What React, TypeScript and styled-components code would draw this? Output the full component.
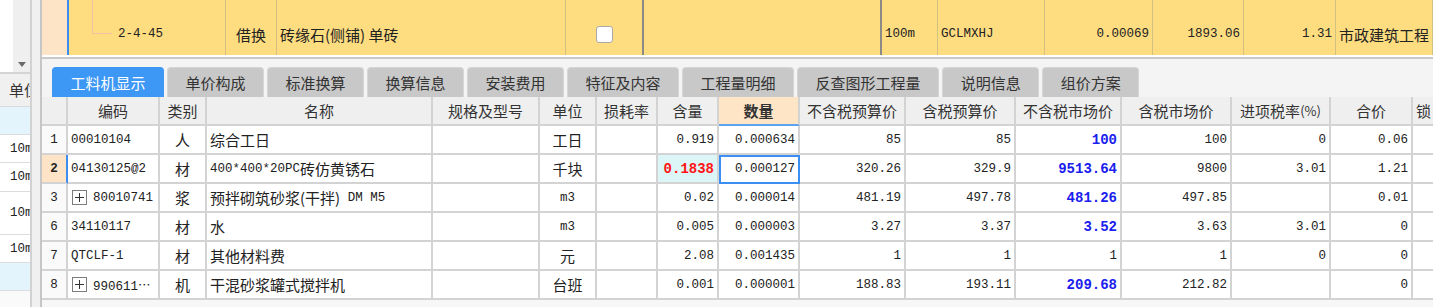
import React from 'react'
import styled, { createGlobalStyle } from 'styled-components'

const CJK = `"Noto Sans CJK SC", "Noto Sans", sans-serif`
const MONO = `"Liberation Mono", "Noto Sans CJK SC", monospace`

const GlobalStyle = createGlobalStyle`
  *, *::before, *::after { box-sizing: border-box; }
  html, body { margin: 0; padding: 0; }
  body {
    width: 1433px;
    height: 307px;
    overflow: hidden;
    background: #f7f7f7;
    font-family: ${CJK};
    color: #222;
  }
`

const Page = styled.div`
  display: flex;
  width: 1433px;
  height: 307px;
  overflow: hidden;
`

/* ---------- left side list ---------- */

const SidePane = styled.div`
  width: 40px;
  flex-shrink: 0;
  display: flex;
  background: #f0f0f0;
`

const SideList = styled.div`
  width: 32px;
  display: flex;
  flex-direction: column;
  background: #fff;
  border-right: 2px solid #d2d2d2;
  overflow: hidden;
`

const SideTop = styled.div`
  height: 72px;
  display: flex;
  flex-shrink: 0;
`

const SideBlank = styled.div`
  width: 13px;
  background: #fff;
`

const ScrollTrack = styled.div`
  flex: 1;
  background: #efefef;
  display: flex;
  flex-direction: column;
  justify-content: flex-end;
  align-items: center;
  padding-bottom: 5px;
`

const Arrow = styled.span`
  width: 0;
  height: 0;
  border-left: 4px solid transparent;
  border-right: 4px solid transparent;
  border-top: 5px solid #6b6b6b;
`

const SideHead = styled.div`
  height: 35px;
  flex-shrink: 0;
  background: #f0f0f0;
  border-top: 2px solid #d4d4d4;
  border-bottom: 1px solid #d9d9d9;
  font: 15px ${CJK};
  line-height: 32px;
  padding-left: 9px;
  white-space: nowrap;
  color: #333;
`

const SideRow = styled.div<{ $h: number; $tint?: boolean }>`
  height: ${p => p.$h}px;
  flex-shrink: 0;
  background: ${p => (p.$tint ? '#e4f4fc' : '#fff')};
  border-bottom: 1px solid #dcdcdc;
  display: flex;
  align-items: center;
  padding-left: 10px;
  font: 12.5px ${MONO};
  white-space: nowrap;
`

const SideFill = styled.div`
  flex: 1;
  background: #fafafa;
`

/* ---------- main pane ---------- */

const MainPane = styled.div`
  flex: 1;
  min-width: 0;
  display: flex;
  flex-direction: column;
  border-left: 2px solid #c6c6c6;
  background: #f7f7f7;
  overflow: hidden;
`

const TopRow = styled.div`
  display: flex;
  height: 55px;
  flex-shrink: 0;
  background: #fedd80;
`

const TopHead = styled.div`
  width: 27px;
  flex-shrink: 0;
  background: #fde4c7;
  border-right: 2px solid #3b8ef0;
`

const TopCell = styled.div<{ $w?: number; $align?: 'left' | 'center' | 'right'; $dark?: boolean; $mono?: boolean }>`
  ${p => (p.$w ? `width: ${p.$w}px; flex-shrink: 0;` : 'flex: 1;')}
  display: flex;
  align-items: center;
  justify-content: ${p => (p.$align === 'right' ? 'flex-end' : p.$align === 'center' ? 'center' : 'flex-start')};
  padding: 13px 3px 0;
  border-right: ${p => (p.$dark ? '2px solid #8b8a84' : '1px solid #d3c183')};
  font: ${p => (p.$mono ? `12.5px ${MONO}` : `15px ${CJK}`)};
  white-space: nowrap;
  overflow: hidden;
`

const TreeLine = styled.span`
  align-self: flex-start;
  margin: -13px 6px 0 20px;
  width: 20px;
  height: 34px;
  border-left: 1px solid #f3c1a4;
  border-bottom: 1px solid #f3c1a4;
`

const CheckBox = styled.span`
  width: 17px;
  height: 17px;
  background: #fff;
  border: 1px solid #a9a9a9;
  border-radius: 3px;
`

const Divider = styled.div`
  height: 4px;
  flex-shrink: 0;
  border-top: 2px solid #fff;
  background: #c9c9c9;
`

const TabBar = styled.div`
  height: 38px;
  flex-shrink: 0;
  display: flex;
  align-items: flex-end;
  gap: 3px;
  padding-left: 10px;
  background: #f4f4f4;
`

const Tab = styled.div<{ $active?: boolean }>`
  height: 30px;
  padding: 0 17.5px;
  display: flex;
  align-items: center;
  border: 1px solid ${p => (p.$active ? '#3d97f5' : '#d6d6d6')};
  border-bottom: none;
  border-radius: 4px 4px 0 0;
  background: ${p => (p.$active ? '#3d97f5' : '#c8c8c8')};
  color: ${p => (p.$active ? '#fff' : '#333')};
  font: 15px ${CJK};
  line-height: 1;
  white-space: nowrap;
`

/* ---------- material grid ---------- */

const COLS = '26px 92px 47px 226px 107px 57px 61px 61px 81px 106px 110px 106px 110px 99px 82px 40px'

const Grid = styled.div`
  display: flex;
  flex-direction: column;
  overflow: hidden;
`

const GridRow = styled.div`
  display: grid;
  grid-template-columns: ${COLS};
  height: 29px;
  flex-shrink: 0;
`

const HeadCell = styled.div<{ $active?: boolean; $start?: boolean }>`
  display: flex;
  align-items: center;
  justify-content: ${p => (p.$start ? 'flex-start' : 'center')};
  padding-left: ${p => (p.$start ? '3px' : '0')};
  background: ${p => (p.$active ? '#fde5c6' : '#efefef')};
  border-right: 2px solid #d3d3d3;
  border-bottom: 2px solid ${p => (p.$active ? '#5ea2f2' : '#d3d3d3')};
  font: ${p => (p.$active ? 700 : 400)} 15px ${CJK};
  color: #333;
  white-space: nowrap;
  overflow: hidden;
`

const Small = styled.span`
  font-size: 13px;
`

type Tone = 'plain' | 'index' | 'indexActive' | 'cyan'

const toneBg: Record<Tone, string> = {
  plain: '#fff',
  index: '#fafafa',
  indexActive: '#fde4c6',
  cyan: '#dcf6f7',
}

const Cell = styled.div<{ $align?: 'left' | 'center' | 'right'; $mono?: boolean; $tone?: Tone; $focus?: boolean }>`
  display: flex;
  align-items: center;
  justify-content: ${p => (p.$align === 'right' ? 'flex-end' : p.$align === 'center' ? 'center' : 'flex-start')};
  padding: 0 3px;
  background: ${p => toneBg[p.$tone || 'plain']};
  border-right: 2px solid ${p => (p.$tone === 'indexActive' ? '#3b8ef0' : '#d3d3d3')};
  border-bottom: 2px solid #d3d3d3;
  font: ${p => (p.$mono ? `12.5px ${MONO}` : `15px ${CJK}`)};
  font-weight: ${p => (p.$tone === 'indexActive' ? 700 : 400)};
  color: #222;
  white-space: pre;
  overflow: hidden;
  outline: ${p => (p.$focus ? '2px solid #3b8ff2' : 'none')};
  outline-offset: -2px;
`

const Latin = styled.span`
  font: 12.5px ${MONO};
`

const Value = styled.span<{ $tint: 'red' | 'blue' }>`
  font: 700 14px ${MONO};
  color: ${p => (p.$tint === 'red' ? '#ff1414' : '#1a20ee')};
`

const Expand = styled.span`
  position: relative;
  width: 15px;
  height: 15px;
  margin: 0 6px 0 1px;
  flex-shrink: 0;
  border: 1px solid #7d7d7d;
  background: #fff;
  &::before,
  &::after {
    content: '';
    position: absolute;
    background: #333;
  }
  &::before {
    left: 2px;
    right: 2px;
    top: 6px;
    height: 1px;
  }
  &::after {
    top: 2px;
    bottom: 2px;
    left: 6px;
    width: 1px;
  }
`

type Material = {
  no: string
  code: string
  expand?: boolean
  kind: string
  name: React.ReactNode
  unit: string
  content: string
  qty: string
  p1: string
  p2: string
  p3: string
  p4: string
  tax: string
  total: string
}

const materials: Material[] = [
  { no: '1', code: '00010104', kind: '人', name: '综合工日', unit: '工日', content: '0.919', qty: '0.000634', p1: '85', p2: '85', p3: '100', p4: '100', tax: '0', total: '0.06' },
  { no: '2', code: '04130125@2', kind: '材', name: <><Latin>400*400*20PC</Latin>砖仿黄锈石</>, unit: '千块', content: '0.1838', qty: '0.000127', p1: '320.26', p2: '329.9', p3: '9513.64', p4: '9800', tax: '3.01', total: '1.21' },
  { no: '3', code: '80010741', expand: true, kind: '浆', name: <>预拌砌筑砂浆(干拌)<Latin> DM M5</Latin></>, unit: 'm3', content: '0.02', qty: '0.000014', p1: '481.19', p2: '497.78', p3: '481.26', p4: '497.85', tax: '', total: '0.01' },
  { no: '6', code: '34110117', kind: '材', name: '水', unit: 'm3', content: '0.005', qty: '0.000003', p1: '3.27', p2: '3.37', p3: '3.52', p4: '3.63', tax: '3.01', total: '0' },
  { no: '7', code: 'QTCLF-1', kind: '材', name: '其他材料费', unit: '元', content: '2.08', qty: '0.001435', p1: '1', p2: '1', p3: '1', p4: '1', tax: '0', total: '0' },
  { no: '8', code: '990611⋯', expand: true, kind: '机', name: '干混砂浆罐式搅拌机', unit: '台班', content: '0.001', qty: '0.000001', p1: '188.83', p2: '193.11', p3: '209.68', p4: '212.82', tax: '', total: '0' },
]

const headers: React.ReactNode[] = [
  '', '编码', '类别', '名称', '规格及型号', '单位', '损耗率', '含量', '数量',
  '不含税预算价', '含税预算价', '不含税市场价', '含税市场价',
  <>进项税率<Small>(%)</Small></>, '合价', '锁',
]

const tabs = ['工料机显示', '单价构成', '标准换算', '换算信息', '安装费用', '特征及内容', '工程量明细', '反查图形工程量', '说明信息', '组价方案']

const sideRows = [
  { h: 28, tint: true, text: '' },
  { h: 28, text: '10m3' },
  { h: 29, text: '10m3' },
  { h: 43, text: '10m3' },
  { h: 28, text: '10m3' },
  { h: 28, tint: true, text: '' },
]

const isAscii = (s: string) => /^[\x00-\x7f]*$/.test(s)

const SELECTED = 1

const App = () => {
  return (
    <>
      <GlobalStyle />
      <Page>
        <SidePane>
          <SideList>
            <SideTop>
              <SideBlank />
              <ScrollTrack>
                <Arrow />
              </ScrollTrack>
            </SideTop>
            <SideHead>单位</SideHead>
            {sideRows.map((r, i) => (
              <SideRow key={i} $h={r.h} $tint={r.tint}>{r.text}</SideRow>
            ))}
            <SideFill />
          </SideList>
        </SidePane>

        <MainPane>
          <TopRow>
            <TopHead />
            <TopCell $w={157} $mono>
              <TreeLine />
              2-4-45
            </TopCell>
            <TopCell $w={51} $align="center">借换</TopCell>
            <TopCell $w={289}>砖缘石(侧铺) 单砖</TopCell>
            <TopCell $w={78} $align="center" $dark>
              <CheckBox />
            </TopCell>
            <TopCell $w={238} $dark />
            <TopCell $w={56} $mono>100m</TopCell>
            <TopCell $w={107} $mono>GCLMXHJ</TopCell>
            <TopCell $w={108} $mono $align="right">0.00069</TopCell>
            <TopCell $w={91} $mono $align="right">1893.06</TopCell>
            <TopCell $w={92} $mono $align="right">1.31</TopCell>
            <TopCell>市政建筑工程</TopCell>
          </TopRow>
          <Divider />
          <TabBar>
            {tabs.map((t, i) => (
              <Tab key={t} $active={i === 0}>{t}</Tab>
            ))}
          </TabBar>

          <Grid>
            <GridRow>
              {headers.map((h, i) => (
                <HeadCell key={i} $active={h === '数量'} $start={h === '锁'}>{h}</HeadCell>
              ))}
            </GridRow>
            {materials.map((m, i) => {
              const sel = i === SELECTED
              return (
                <GridRow key={m.no}>
                  <Cell $align="center" $mono $tone={sel ? 'indexActive' : 'index'}>{m.no}</Cell>
                  <Cell $mono>
                    {m.expand && <Expand />}
                    {m.code}
                  </Cell>
                  <Cell $align="center">{m.kind}</Cell>
                  <Cell>{m.name}</Cell>
                  <Cell />
                  <Cell $align="center" $mono={isAscii(m.unit)}>{m.unit}</Cell>
                  <Cell />
                  <Cell $align="right" $mono $tone={sel ? 'cyan' : 'plain'}>
                    {sel ? <Value $tint="red">{m.content}</Value> : m.content}
                  </Cell>
                  <Cell $align="right" $mono $focus={sel}>{m.qty}</Cell>
                  <Cell $align="right" $mono>{m.p1}</Cell>
                  <Cell $align="right" $mono>{m.p2}</Cell>
                  <Cell $align="right" $mono>
                    {m.p3 === m.p1 && m.p3 === '1' ? m.p3 : <Value $tint="blue">{m.p3}</Value>}
                  </Cell>
                  <Cell $align="right" $mono>{m.p4}</Cell>
                  <Cell $align="right" $mono>{m.tax}</Cell>
                  <Cell $align="right" $mono>{m.total}</Cell>
                  <Cell />
                </GridRow>
              )
            })}
          </Grid>
        </MainPane>
      </Page>
    </>
  )
}

export default App
